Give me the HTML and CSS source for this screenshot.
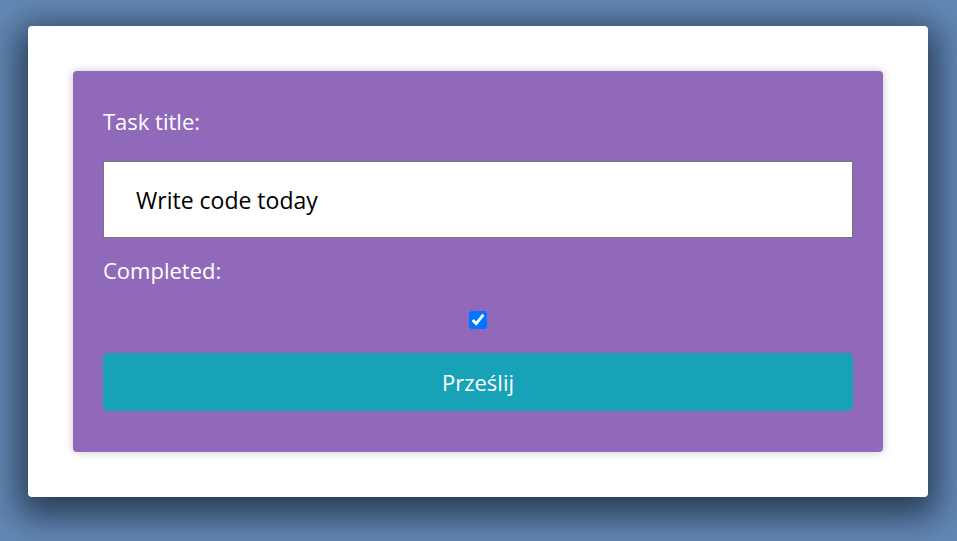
FILE: index.html
```html
<!DOCTYPE html>
<html>
<head>
<meta charset="utf-8">
<link rel="stylesheet" href="styles.css">
</head>
<body>
<div class="card">
  <form class="task-form">
    <label class="field-label" for="title">Task title:</label>
    <input class="text-input" id="title" type="text" value="Write code today">
    <label class="field-label completed-label" for="done">Completed:</label>
    <div class="check-row"><input class="check" id="done" type="checkbox" checked></div>
    <button class="submit" type="button">Prześlij</button>
  </form>
</div>
</body>
</html>
```
FILE: styles.css
```css
html, body {
  height: 100%;
}
body {
  margin: 0;
  background: #6389b6;
  font-family: "Open Sans", "Noto Sans", sans-serif;
  padding: 26px 0 0 28px;
  box-sizing: border-box;
}
.card {
  width: 900px;
  height: 471px;
  background: #fff;
  border-radius: 4px;
  box-sizing: border-box;
  padding: 45px;
  box-shadow: 0 10px 34px 10px rgba(20, 30, 50, 0.72);
}
.task-form {
  background: #9169bb;
  border-radius: 4px;
  padding: 30px 30px 41px;
  display: flex;
  flex-direction: column;
  box-shadow: 0 0 10px rgba(0, 0, 0, 0.22);
}
.field-label {
  color: #fff;
  font-size: 22px;
  line-height: 40px;
  display: block;
}
.text-input {
  margin-top: 20px;
  height: 77px;
  box-sizing: border-box;
  border: 1px solid #767676;
  padding: 0 32px;
  font-family: inherit;
  font-size: 23px;
  color: #000;
  background: #fff;
  outline: none;
}
.completed-label {
  margin-top: 12px;
}
.check-row {
  display: flex;
  justify-content: center;
  padding: 21px 0 24px;
}
.check {
  margin: 0;
  width: 18px;
  height: 18px;
  accent-color: #0075ff;
}
.submit {
  height: 58px;
  border: none;
  border-radius: 5px;
  background: #17a2b8;
  color: #fff;
  font-family: inherit;
  font-size: 22px;
}
```
